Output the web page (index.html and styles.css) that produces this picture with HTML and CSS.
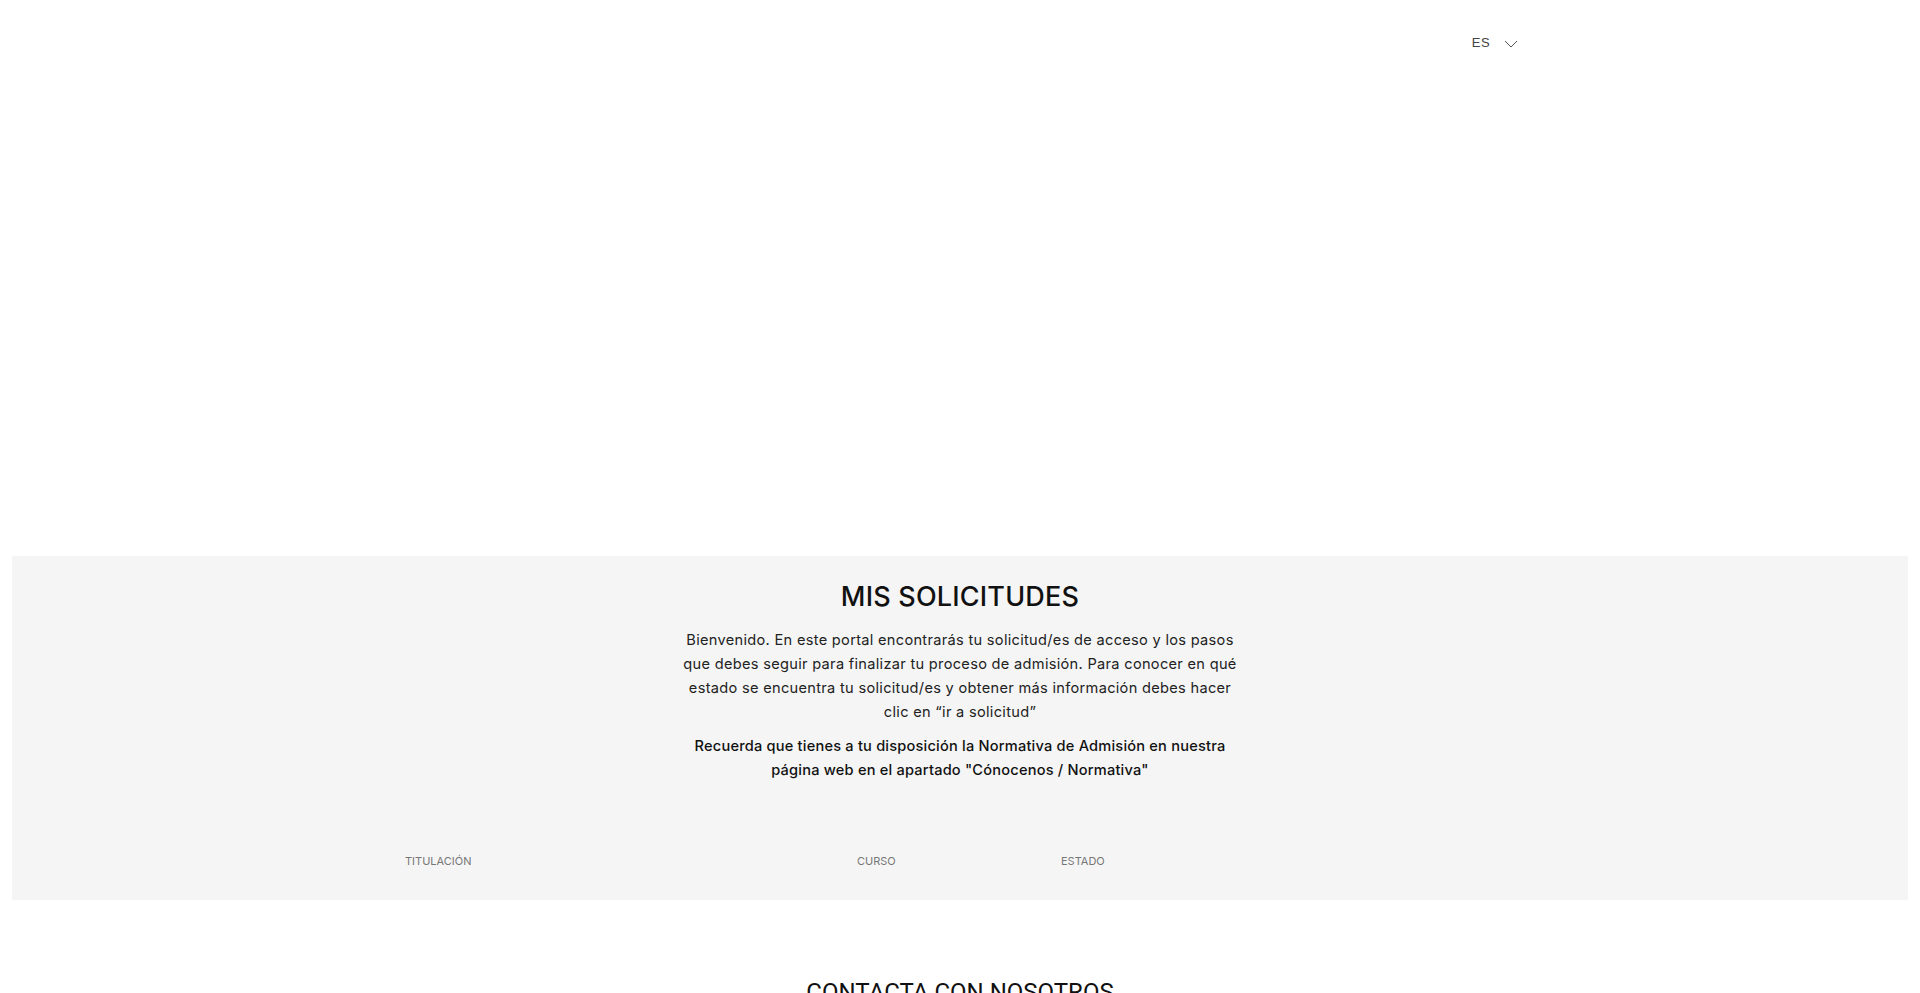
FILE: index.html
```html
<!DOCTYPE html>
<html lang="es">
<head>
<meta charset="utf-8">
<title>Mis solicitudes</title>
<link rel="stylesheet" href="styles.css">
</head>
<body>
<div class="page">
  <header class="topbar">
    <div class="container topbar-inner">
      <button class="lang">
        <span class="lang-code">ES</span>
        <svg class="chev" width="14" height="8" viewBox="0 0 14 8" aria-hidden="true"><path d="M1 1l6 6 6-6" fill="none" stroke="#555" stroke-width="1"/></svg>
      </button>
    </div>
  </header>
  <div class="hero"></div>
  <section class="panel">
    <h1 class="title">MIS SOLICITUDES</h1>
    <p class="intro">Bienvenido. En este portal encontrarás tu solicitud/es de acceso y los pasos que debes seguir para finalizar tu proceso de admisión. Para conocer en qué estado se encuentra tu solicitud/es y obtener más información debes hacer clic en “ir a solicitud”</p>
    <p class="note">Recuerda que tienes a tu disposición la Normativa de Admisión en nuestra página web en el apartado "Cónocenos / Normativa"</p>
    <div class="container">
      <div class="table-head">
        <span class="col col-tit">TITULACIÓN</span>
        <span class="col col-cur">CURSO</span>
        <span class="col col-est">ESTADO</span>
      </div>
    </div>
  </section>
  <section class="contact">
    <h2 class="contact-title">CONTACTA CON NOSOTROS</h2>
  </section>
</div>
</body>
</html>
```
FILE: styles.css
```css
* { box-sizing: border-box; }
html, body { margin: 0; padding: 0; background: #fff; }
body { font-family: Inter, "Noto Sans", sans-serif; color: #111; }
.page { padding: 0 12px; }
.container { width: 1120px; margin: 0 auto; }
.topbar { height: 86px; }
.topbar-inner { display: flex; justify-content: flex-end; padding-top: 35px; }
.lang { display: flex; align-items: center; gap: 14px; background: none; border: 0; padding: 0 2px 0 0; font-family: "Liberation Sans", Arial, sans-serif; font-size: 13px; font-weight: 400; color: #444; letter-spacing: 0.4px; cursor: pointer; }
.chev { margin-top: 2px; }
.hero { height: 470px; }
.panel { background: #f5f5f5; padding: 23px 0 32px; text-align: center; }
.title { margin: 0; font-size: 27px; font-weight: 500; letter-spacing: 0.2px; line-height: 36px; color: #111; }
.intro { width: 556px; margin: 13px auto 0; font-size: 14.6px; line-height: 24px; font-weight: 400; color: #222; letter-spacing: 0.3px; }
.note { width: 560px; margin: 10px auto 0; font-size: 14.6px; line-height: 24px; font-weight: 500; color: #111; letter-spacing: 0.2px; }
.table-head { display: grid; grid-template-columns: 452px 204px 1fr; padding: 72px 0 0 5px; text-align: left; }
.col { font-size: 11px; color: #777; letter-spacing: 0; }
.contact { padding-top: 78px; text-align: center; }
.contact-title { margin: 0; font-family: Roboto, sans-serif; font-weight: 400; font-size: 24px; letter-spacing: 0; color: #111; }
```
